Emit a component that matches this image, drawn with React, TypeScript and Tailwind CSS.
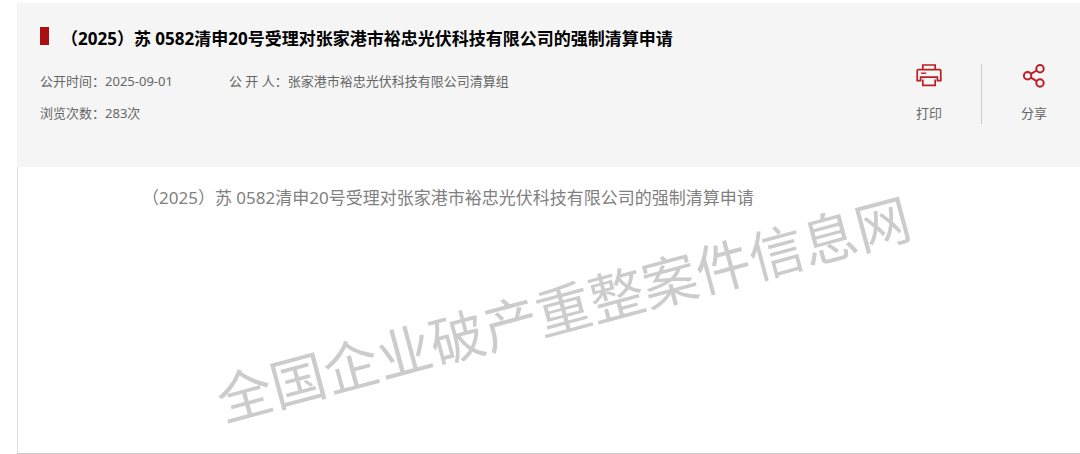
import type { ReactNode } from "react";

const TITLE = "（2025）苏 0582清申20号受理对张家港市裕忠光伏科技有限公司的强制清算申请";

function PrintIcon() {
  return (
    <svg width="26" height="24" viewBox="0 0 26 24" fill="none" stroke="#bb1f24" strokeWidth="1.7" aria-hidden="true">
      <path d="M6.8 5.6V1h12.4v4.6" />
      <path d="M4.6 16.6H1.2V6.8q0-1.2 1.2-1.2h21.2q1.2 0 1.2 1.2v9.8h-3.4V13.2H4.6z" />
      <path d="M6.8 15.4v6h12.4v-6" />
      <path d="M5 9.2h5.2" strokeWidth="1.4" />
    </svg>
  );
}

function ShareIcon() {
  return (
    <svg width="22" height="24" viewBox="0 0 22 24" fill="none" stroke="#bb1f24" strokeWidth="2" aria-hidden="true">
      <circle cx="4.6" cy="11.8" r="3.7" />
      <circle cx="17" cy="4.7" r="3.7" />
      <circle cx="17" cy="19" r="3.7" />
      <path d="M7.8 9.9l6-3.4M7.8 13.7l6 3.4" />
    </svg>
  );
}

function Action({ label, children }: { label: string; children: ReactNode }) {
  return (
    <button type="button" className="flex cursor-pointer flex-col items-center gap-[15px] text-[13px] leading-5 text-[#666]">
      {children}
      <span>{label}</span>
    </button>
  );
}

export default function App() {
  return (
    <main className="bg-white pt-[3px] pl-[17px] font-['Noto_Sans','Noto_Sans_CJK_SC',sans-serif]">
      <header className="bg-[#f5f5f5] pt-5 pb-[43px] pl-[23px]">
        <h1 className="flex items-center gap-3 text-[17px] leading-8 font-bold text-black">
          <span className="mb-1.5 h-[18px] w-[9px] shrink-0 bg-[#aa1013]" aria-hidden="true" />
          {TITLE}
        </h1>
        <div className="flex justify-between">
          <dl className="mt-4 flex flex-col gap-3 text-[13px] leading-5 text-[#666]">
            <div className="flex gap-14">
              <div className="flex">
                <dt>公开时间：</dt>
                <dd>2025-09-01</dd>
              </div>
              <div className="flex">
                <dt>公 开 人：</dt>
                <dd>张家港市裕忠光伏科技有限公司清算组</dd>
              </div>
            </div>
            <div className="flex">
              <dt>浏览次数：</dt>
              <dd>283次</dd>
            </div>
          </dl>
          <div className="mt-[9px] flex items-start gap-[39px] pr-[33px]">
            <Action label="打印">
              <PrintIcon />
            </Action>
            <div className="h-15 w-px bg-[#ccc]" />
            <Action label="分享">
              <ShareIcon />
            </Action>
          </div>
        </div>
      </header>
      <article className="relative min-h-[287px] overflow-hidden border-b border-l border-b-[#ccc] border-l-[#ddd] pt-[15px] pl-[124px]">
        <p className="text-[17px] leading-8 text-[#808080]">{TITLE}</p>
        <p className="pointer-events-none absolute top-[102px] left-[188px] -rotate-15 text-[55px] leading-[80px] whitespace-nowrap text-[#ccc] select-none">
          全国企业破产重整案件信息网
        </p>
      </article>
    </main>
  );
}
